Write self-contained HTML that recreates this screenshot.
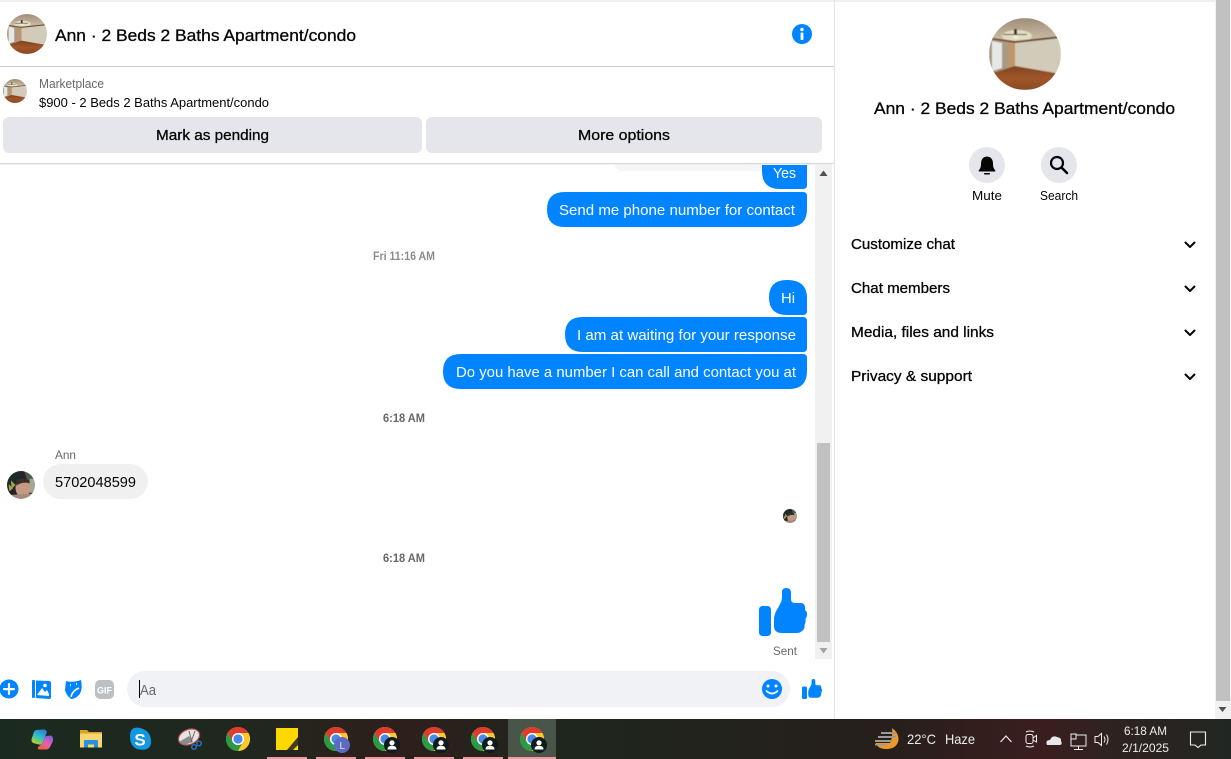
<!DOCTYPE html>
<html lang="en"><head><meta charset="utf-8"><title>Messenger</title>
<style>
html,body{margin:0;padding:0;background:#fff;width:1231px;height:759px;overflow:hidden}
svg{display:block;position:absolute;left:0;top:0}
text{font-family:"Liberation Sans",sans-serif;white-space:pre}
.s{stroke-width:.3px;stroke:currentColor}
</style></head><body>
<svg width="1231" height="759" viewBox="0 0 1231 759" xmlns="http://www.w3.org/2000/svg">
<defs>
<clipPath id="cc"><circle cx="36" cy="36" r="36"/></clipPath>
<filter id="bl" x="0" y="0" width="1" height="1"><feGaussianBlur stdDeviation=".5"/></filter>
<linearGradient id="ceil" x1="0" x2="0" y1="0" y2="1"><stop offset="0" stop-color="#9f8c78"/><stop offset="1" stop-color="#cfc4aa"/></linearGradient>
<linearGradient id="fl" x1="0" x2="0" y1="0" y2="1"><stop offset="0" stop-color="#7e4420"/><stop offset=".5" stop-color="#a0562a"/><stop offset="1" stop-color="#8a4a22"/></linearGradient>
<linearGradient id="cop1" x1=".7" x2=".2" y1="0" y2="1"><stop offset="0" stop-color="#2a7fe0"/><stop offset=".5" stop-color="#2fc4c4"/><stop offset=".8" stop-color="#8ccb4a"/><stop offset="1" stop-color="#f3d13c"/></linearGradient>
<linearGradient id="cop2" x1=".8" x2=".2" y1="0" y2="1"><stop offset="0" stop-color="#7f5be0"/><stop offset=".5" stop-color="#e25fb4"/><stop offset="1" stop-color="#f0603a"/></linearGradient>
<symbol id="room" viewBox="0 0 72 72"><g clip-path="url(#cc)"><g filter="url(#bl)">
<rect width="72" height="72" fill="#d2cab8"/>
<rect width="72" height="24" fill="url(#ceil)"/>
<ellipse cx="28" cy="18" rx="15" ry="6" fill="#e2dcc0"/>
<path d="M26 24L72 19V56L26 48Z" fill="#d3cbb9"/>
<path d="M0 19L26 24V48L0 56Z" fill="#a99a85"/>
<path d="M20 23L26 24V48L20 50Z" fill="#c39566"/>
<path d="M3 23L13 25V50L3 53Z" fill="#e6e8e6"/>
<path d="M0 19.500L26 23 72 18V20L26 25 0 21Z" fill="#6c4a38"/>
<path d="M0 56L26 48 72 56V72H0Z" fill="url(#fl)"/>
<path d="M14 16H38V17H14Z" fill="#4b4036"/>
<path d="M25 11h3v6h-3z" fill="#3d3229"/>
<ellipse cx="27" cy="19" rx="3.500" ry="1.500" fill="#f3edd2"/>
</g></g></symbol>
<symbol id="person" viewBox="0 0 72 72"><g clip-path="url(#cc)"><g filter="url(#bl)">
<rect width="72" height="72" fill="#26242a"/>
<path d="M0 0H36L30 30 12 52 0 50Z" fill="#1d2b2e"/>
<path d="M44 0H72V30H54Z" fill="#4e5c4d"/>
<path d="M10 24L22 36 12 46ZM4 34L16 44 6 52Z" fill="#a9a247"/>
<ellipse cx="41" cy="44" rx="19" ry="24" fill="#c59a85"/>
<path d="M24 24Q40 14 58 24L60 32Q40 26 24 38Z" fill="#3a2f2a"/>
<path d="M0 62L72 58V72H0Z" fill="#a58a7a"/>
<path d="M58 20H72V56H58Z" fill="#a7a691"/>
</g></g></symbol>
<symbol id="like" viewBox="759 588 48 48">
<rect x="759" y="606" width="12" height="30" rx="3.500" fill="#0084ff"/>
<path d="M774 618Q775 612 778 608L781 602Q782 600 782 596V592Q782 588 786.500 588Q791 588 791 593V599Q791 603 795 603H801Q805 603 805 608V610Q807.500 612 807 615Q807 617 805.500 619Q806 623 804.500 625Q805 629 802 631Q800 633 797 633H782Q774 633 774 626Z" fill="#0084ff"/>
</symbol>
<symbol id="chrome" viewBox="-12 -12 24 24">
<circle r="12" fill="#fbbc04"/>
<path d="M-10.400-6A12 12 0 0 1 10.400-6L0-6A6 6 0 0 0-5.200 3Z" fill="#dd3b2f"/>
<path d="M-10.400-6A12 12 0 0 0 0 12L5.200 3A6 6 0 0 1-5.200 3Z" fill="#2a9a48"/>
<path d="M10.400-6H0A6 6 0 0 1 5.200 3L0 12A12 12 0 0 0 10.400-6Z" fill="#fdc92e"/>
<circle r="6" fill="#fff"/><circle r="4.600" fill="#4a88ea"/>
</symbol>
<symbol id="prof" viewBox="-8 -8 16 16">
<circle r="8" fill="#101c1a"/>
<circle cy="-2.200" r="2.600" fill="#fff"/><path d="M-4.500 4.500Q-4.500 .8 0 .8T4.500 4.500Z" fill="#fff"/>
</symbol>
<linearGradient id="tb" x1="0" x2="1" y1="0" y2="0">
<stop offset="0" stop-color="#1b2a20"/><stop offset=".2" stop-color="#20271e"/><stop offset=".32" stop-color="#2e1f1c"/>
<stop offset=".46" stop-color="#1f261d"/><stop offset=".72" stop-color="#261f1c"/><stop offset=".84" stop-color="#3a1e1e"/><stop offset=".93" stop-color="#2a2421"/><stop offset="1" stop-color="#222622"/>
</linearGradient>
</defs>

<!-- page base -->
<rect width="1231" height="759" fill="#fff"/>
<rect width="1215" height="2" fill="#efefef"/>

<!-- chat header -->
<use href="#room" x="7" y="14" width="40" height="40"/>
<text class="s" x="55" y="41" font-size="17" textLength="301" lengthAdjust="spacingAndGlyphs" fill="#050505" color="#050505">Ann · 2 Beds 2 Baths Apartment/condo</text>
<circle cx="802" cy="34" r="10" fill="#0084ff"/><circle cx="802" cy="29.500" r="1.700" fill="#fff"/><rect x="800.600" y="32.500" width="2.800" height="7.500" rx=".8" fill="#fff"/>
<rect x="0" y="66" width="834" height="1" fill="#cfd0d6"/>

<!-- marketplace -->
<use href="#room" x="3" y="79" width="24" height="24"/>
<text x="39" y="88" font-size="12.500" textLength="65" lengthAdjust="spacingAndGlyphs" fill="#65676b">Marketplace</text>
<text x="39" y="107" font-size="13" textLength="230" lengthAdjust="spacingAndGlyphs" fill="#050505">$900 - 2 Beds 2 Baths Apartment/condo</text>
<rect x="3" y="117" width="419" height="36" rx="6" fill="#e4e6eb"/>
<rect x="426" y="117" width="396" height="36" rx="6" fill="#e4e6eb"/>
<text class="s" x="156" y="140" font-size="15" textLength="113" lengthAdjust="spacingAndGlyphs" fill="#050505" color="#050505">Mark as pending</text>
<text class="s" x="578" y="140" font-size="15" textLength="92" lengthAdjust="spacingAndGlyphs" fill="#050505" color="#050505">More options</text>

<!-- messages -->
<rect x="614" y="155" width="160" height="16" rx="8" fill="#f6f6f6"/>
<path d="M762 155H807V185Q807 189 803 189H780Q762 189 762 171Z" fill="#0084ff"/>
<text x="773" y="178" font-size="15" textLength="23" lengthAdjust="spacingAndGlyphs" fill="#fff">Yes</text>
<path d="M565 192H803Q807 192 807 196V209Q807 227 789 227H565Q547 227 547 209.500T565 192Z" fill="#0084ff"/>
<text x="559" y="215" font-size="15" textLength="236" lengthAdjust="spacingAndGlyphs" fill="#fff">Send me phone number for contact</text>
<text x="373" y="260" font-size="12" font-weight="700" textLength="62" lengthAdjust="spacingAndGlyphs" fill="#8a8d91">Fri 11:16 AM</text>

<path d="M787 280Q807 280 807 298V311Q807 315 803 315H787Q769 315 769 297.500T787 280Z" fill="#0084ff"/>
<text x="781" y="303" font-size="15" textLength="14" lengthAdjust="spacingAndGlyphs" fill="#fff">Hi</text>
<path d="M583 317H803Q807 317 807 321V348Q807 352 803 352H583Q565 352 565 334.500T583 317Z" fill="#0084ff"/>
<text x="577" y="340" font-size="15" textLength="219" lengthAdjust="spacingAndGlyphs" fill="#fff">I am at waiting for your response</text>
<path d="M461 354H803Q807 354 807 358V371Q807 389 789 389H461Q443 389 443 371.500T461 354Z" fill="#0084ff"/>
<text x="456" y="377" font-size="15" textLength="340" lengthAdjust="spacingAndGlyphs" fill="#fff">Do you have a number I can call and contact you at</text>

<text x="383" y="422" font-size="12" font-weight="700" textLength="42" lengthAdjust="spacingAndGlyphs" fill="#65676b">6:18 AM</text>
<text x="55" y="459" font-size="12" textLength="21" lengthAdjust="spacingAndGlyphs" fill="#65676b">Ann</text>
<use href="#person" x="7" y="471" width="28" height="28"/>
<rect x="43" y="464" width="105" height="35" rx="17.500" fill="#f0f0f0"/>
<text x="55" y="487" font-size="15" textLength="81" lengthAdjust="spacingAndGlyphs" fill="#050505">5702048599</text>
<use href="#person" x="783" y="509" width="14" height="14"/>
<text x="383" y="562" font-size="12" font-weight="700" textLength="42" lengthAdjust="spacingAndGlyphs" fill="#65676b">6:18 AM</text>
<use href="#like" x="759" y="588" width="48" height="48"/>
<text x="773" y="655" font-size="12" textLength="24" lengthAdjust="spacingAndGlyphs" fill="#65676b">Sent</text>

<!-- header shadow -->
<rect x="0" y="153" width="834" height="10" fill="#fff"/>
<rect x="0" y="163" width="834" height="1" fill="#d8d8d8"/>
<rect x="0" y="164" width="815" height="1" fill="#f0f0f0"/>

<!-- inner scrollbar -->
<rect x="815" y="164" width="17" height="495" fill="#f1f1f1"/>
<rect x="817" y="443" width="13" height="199" fill="#c1c1c1"/>
<path d="M819.500 176L823.500 170.500 827.500 176Z" fill="#505050"/>
<path d="M819.500 648L823.500 653.500 827.500 648Z" fill="#a3a3a3"/>

<!-- composer -->
<circle cx="9" cy="689" r="9.500" fill="#0084ff"/><rect x="3" y="688" width="12" height="2.200" rx="1" fill="#fff"/><rect x="7.900" y="683" width="2.200" height="12" rx="1" fill="#fff"/>
<g fill="#0084ff"><rect x="32" y="680" width="3" height="18" rx="1"/><path d="M36 680.500L49 681Q51 681 51 683V697Q51 699 49 699L36 698Z"/></g>
<circle cx="45" cy="685.500" r="1.800" fill="#fff"/><path d="M37 695L42 688 45 692 47 690 49 694V696Z" fill="#fff"/>
<path d="M66 681Q72 683 81 680Q83 690 79 695Q75 699 71 699Q66 695 65 690Z" fill="#0084ff"/><path d="M71 697Q72 691 79 688M70 685h1M76 684h1" stroke="#fff" stroke-width="1.500" fill="none"/>
<rect x="95" y="680" width="19" height="19" rx="5" fill="#bcc0c4"/>
<text x="97" y="693.500" font-size="9.500" font-weight="700" textLength="15" lengthAdjust="spacingAndGlyphs" fill="#fff">GIF</text>
<rect x="127" y="671" width="663" height="36" rx="18" fill="#f0f2f5"/>
<rect x="139" y="680" width="1" height="18" fill="#050505"/>
<text x="140" y="695" font-size="15" textLength="16" lengthAdjust="spacingAndGlyphs" fill="#65676b">Aa</text>
<circle cx="772" cy="689" r="10" fill="#0084ff"/><circle cx="768" cy="686" r="1.500" fill="#fff"/><circle cx="776" cy="686" r="1.500" fill="#fff"/><path d="M766.500 691Q772 696 777.500 691" stroke="#fff" stroke-width="1.800" fill="none" stroke-linecap="round"/>
<use href="#like" x="802" y="679" width="20" height="20"/>

<!-- divider -->
<rect x="834" y="0" width="1" height="719" fill="#e3e3e3"/>

<!-- right panel -->
<use href="#room" x="989" y="18" width="72" height="72"/>
<text class="s" x="874" y="114" font-size="17" textLength="301" lengthAdjust="spacingAndGlyphs" fill="#050505" color="#050505">Ann · 2 Beds 2 Baths Apartment/condo</text>
<circle cx="987" cy="165" r="18" fill="#e4e6eb"/>
<path d="M987 156.500Q993 157 993 164Q993 168 995 170Q996 171.500 994.500 171.500H979.500Q978 171.500 979 170Q981 168 981 164Q981 157 987 156.500Z" fill="#050505"/><rect x="984" y="173" width="6" height="1.500" rx=".7" fill="#050505"/>
<circle cx="1059" cy="165" r="18" fill="#e4e6eb"/>
<circle cx="1057" cy="163" r="6" fill="none" stroke="#050505" stroke-width="2.200"/><path d="M1061.500 167.500L1067 173" stroke="#050505" stroke-width="2.600" stroke-linecap="round"/>
<text x="972" y="200" font-size="13" textLength="30" lengthAdjust="spacingAndGlyphs" fill="#050505">Mute</text>
<text x="1040" y="200" font-size="13" textLength="38" lengthAdjust="spacingAndGlyphs" fill="#050505">Search</text>
<g fill="#050505" color="#050505" font-size="15">
<text class="s" x="851" y="249" textLength="104" lengthAdjust="spacingAndGlyphs">Customize chat</text>
<text class="s" x="851" y="293" textLength="99" lengthAdjust="spacingAndGlyphs">Chat members</text>
<text class="s" x="851" y="337" textLength="143" lengthAdjust="spacingAndGlyphs">Media, files and links</text>
<text class="s" x="851" y="381" textLength="121" lengthAdjust="spacingAndGlyphs">Privacy &amp; support</text>
</g>
<path d="M1185.500 242.500L1190 247 1194.500 242.500M1185.500 286.500L1190 291 1194.500 286.500M1185.500 330.500L1190 335 1194.500 330.500M1185.500 374.500L1190 379 1194.500 374.500" fill="none" stroke="#050505" stroke-width="2" stroke-linecap="round" stroke-linejoin="round"/>

<!-- page scrollbar -->
<rect x="1215" y="0" width="16" height="719" fill="#f1f1f1"/>
<rect x="1216" y="0" width="14" height="701" fill="#c1c1c1"/>
<path d="M1218.500 707L1222.500 712 1226.500 707Z" fill="#505050"/>

<!-- taskbar -->
<rect x="0" y="719" width="1231" height="40" fill="url(#tb)"/>
<rect x="508" y="719" width="48" height="40" fill="#4a5549"/>
<g fill="#f29aa2"><rect x="267" y="757" width="40" height="2"/><rect x="316" y="757" width="40" height="2"/><rect x="365" y="757" width="40" height="2"/><rect x="414" y="757" width="40" height="2"/><rect x="463" y="757" width="40" height="2"/><rect x="508" y="757" width="48" height="2"/></g>

<!-- copilot -->
<path d="M36 730L44 729.500Q46 729.500 47 732L42 744Q41 745 39 744.500L35 743.500Q31 743 31.500 739L34 732Q34.500 730.500 36 730Z" fill="url(#cop1)"/>
<path d="M47 736L51 735.500Q53.500 736.500 53 741L50 747Q49 749.500 46 749.500L40 749.500Q37 749.500 38 747L42 744 45 737Q45.500 736 47 736Z" fill="url(#cop2)"/>
<!-- explorer -->
<path d="M80 730H87L89 732H102V747H80Z" fill="#d9a420"/><rect x="80" y="733.500" width="22" height="14" fill="#f7d774"/><path d="M84 747.500V741Q84 740 85 740H97Q98 740 98 741V747.500H94V744.500H88V747.500Z" fill="#2b8fdc"/>
<!-- skype -->
<path d="M134 728Q139 727 143 729Q151 732 151 742Q151 747 147 749Q143 750.500 137 749Q130 746 130 736Q130 730 134 728Z" fill="#1297e0"/>
<text x="140" y="745.500" font-size="17" font-weight="700" text-anchor="middle" fill="#fff">S</text>
<!-- snip -->
<ellipse cx="189" cy="737" rx="11" ry="7.500" fill="#e8e4e1" stroke="#b0454a" stroke-width="1.200" transform="rotate(-22 189 737)"/>
<path d="M179 742L189 736 193 742 184 745Z" fill="#8b8b8b"/>
<path d="M189 731L192 742M195 731L191 742" stroke="#6a6a6a" stroke-width="1"/>
<circle cx="194" cy="747" r="2.300" fill="none" stroke="#2377d0" stroke-width="1.400"/><circle cx="199" cy="743.500" r="2.300" fill="none" stroke="#2377d0" stroke-width="1.400"/>
<!-- chrome -->
<use href="#chrome" x="226" y="727" width="24" height="24"/>
<!-- sticky -->
<rect x="276" y="728" width="22" height="22" fill="#ffd800"/><path d="M298 737V745L293 750H287Z" fill="#403a27"/>
<!-- profile chromes -->
<use href="#chrome" x="324" y="727" width="24" height="24"/><circle cx="342" cy="745" r="8" fill="#5c6bc0"/><text x="339.500" y="749" font-size="10" fill="#dfe3ff">L</text>
<use href="#chrome" x="373" y="727" width="24" height="24"/><use href="#prof" x="384" y="737" width="16" height="16"/>
<use href="#chrome" x="422" y="727" width="24" height="24"/><use href="#prof" x="433" y="737" width="16" height="16"/>
<use href="#chrome" x="471" y="727" width="24" height="24"/><use href="#prof" x="482" y="737" width="16" height="16"/>
<use href="#chrome" x="520" y="727" width="24" height="24"/><use href="#prof" x="531" y="737" width="16" height="16"/>

<!-- tray -->
<path d="M892 728Q899 733 898.500 740Q897 749 886 749Q878 749 875.500 743H890Q893 737 892 728Z" fill="#eb9a2a"/>
<path d="M877 743H896Q895 749 886 749Q880 749 877 743Z" fill="#eb9a2a"/>
<g fill="#9a9a96"><rect x="881" y="732" width="15" height="2"/><rect x="878" y="736" width="18" height="2"/><rect x="875" y="740" width="17" height="2"/><rect x="875" y="744" width="12" height="1.500"/></g>
<text x="907" y="744" font-size="14" textLength="29" lengthAdjust="spacingAndGlyphs" fill="#ececec">22°C</text>
<text x="945" y="744" font-size="14" textLength="30" lengthAdjust="spacingAndGlyphs" fill="#ececec">Haze</text>
<path d="M1000.500 742L1006 736 1011.500 742" fill="none" stroke="#eee" stroke-width="1.200"/>
<rect x="1026" y="734.500" width="7" height="9" rx="2" fill="none" stroke="#eee" stroke-width="1"/><path d="M1033 738L1036.500 735.500V742L1033 740M1026 732Q1030 730 1034 732M1026 746Q1030 748 1034 746" fill="none" stroke="#eee" stroke-width="1"/>
<path d="M1047 745Q1045 740 1050 740Q1052 735 1057 737Q1062 738 1061 741Q1063 745 1059 745Z" fill="#e8e8e8"/>
<path d="M1071 735H1086V746H1071ZM1078.500 746V749M1074 749.500H1083" fill="none" stroke="#eee" stroke-width="1"/><rect x="1071" y="734" width="5" height="5" fill="#2a2421" stroke="#eee" stroke-width="1"/>
<path d="M1095 736.500H1098L1101.500 733.500V745.500L1098 742.500H1095ZM1104 736.500Q1106 739.500 1104 742.500M1106.500 734.500Q1109.500 739.500 1106.500 744.500" fill="none" stroke="#eee" stroke-width="1"/>
<text x="1124" y="735" font-size="12" textLength="43" lengthAdjust="spacingAndGlyphs" fill="#ececec">6:18 AM</text>
<text x="1122" y="752" font-size="12" textLength="47" lengthAdjust="spacingAndGlyphs" fill="#ececec">2/1/2025</text>
<path d="M1190.500 732H1205.500V745H1201L1198 747.500 1195 745H1190.500Z" fill="none" stroke="#f0f0f0" stroke-width="1.100"/>
</svg>
</body></html>
